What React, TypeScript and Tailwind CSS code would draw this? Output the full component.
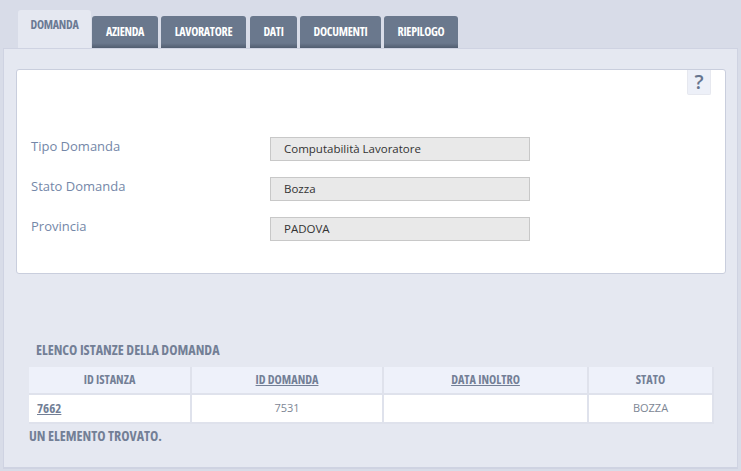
import React from "react";

const tabs = [
  { label: "AZIENDA", width: "w-[66px]", margin: "ml-[1px]" },
  { label: "LAVORATORE", width: "w-[85px]", margin: "ml-[3px]" },
  { label: "DATI", width: "w-[47px]", margin: "ml-[4px]" },
  { label: "DOCUMENTI", width: "w-[81px]", margin: "ml-[3px]" },
  { label: "RIEPILOGO", width: "w-[74px]", margin: "ml-[3px]" },
];

const fields = [
  { label: "Tipo Domanda", value: "Computabilità Lavoratore" },
  { label: "Stato Domanda", value: "Bozza" },
  { label: "Provincia", value: "PADOVA" },
];

const condensed = "font-bold [font-stretch:75%]";
const headCell =
  "h-[28px] flex items-center justify-center bg-[#eef1fa] border-r-2 border-b-2 border-[#dfe2ec] text-[#737f96] text-[12.2px]";
const bodyCell =
  "h-[29px] flex items-center justify-center bg-white border-r-2 border-b-2 border-[#dfe2ec] text-[#7d8694] text-[11px]";

const App: React.FC = () => {
  return (
    <div className="w-[741px] h-[471px] overflow-hidden bg-[#d8dce8] font-['Open_Sans',sans-serif] pt-[10px]">
      <div className="flex items-end h-[38px] pl-[18px]">
        <div
          className={`w-[73px] h-[38px] pb-[8px] flex items-center justify-center rounded-t-[3px] bg-[#e5e8f1] text-[#6b7a94] text-[12px] tracking-[-0.3px] ${condensed}`}
        >
          DOMANDA
        </div>
        {tabs.map((tab) => (
          <div
            key={tab.label}
            className={`${tab.width} ${tab.margin} h-[32px] flex items-center justify-center rounded-t-[3px] bg-gradient-to-b from-[#6a788d] from-85% to-[#515d70] text-white text-[12px] tracking-[-0.3px] ${condensed}`}
          >
            {tab.label}
          </div>
        ))}
      </div>

      <div className="ml-[3px] w-[735px] h-[421px] bg-[#e5e8f1] border border-[#cfd3e2] border-b-2 pl-[12px] pt-[20px]">
        <div className="w-[710px] h-[205px] bg-white border border-[#c9cedd] rounded-[3px] flex flex-col">
          <div className="flex justify-end pr-[14px] h-[26px]">
            <div className="w-[24px] h-[25px] bg-[#edf0f8] rounded-b-[2px] border-x border-b border-[#e6e8ef] flex items-center justify-center text-[#66758f] text-[20px] font-semibold leading-none">
              ?
            </div>
          </div>
          <div className="flex flex-col gap-[16px] pt-[41px] pl-[14px]">
            {fields.map((field) => (
              <div key={field.label} className="flex items-start h-[24px]">
                <div className="w-[239px] text-[13px] leading-[18px] text-[#7487a8]">
                  {field.label}
                </div>
                <div className="w-[260px] h-[24px] bg-[#e9e9e9] border border-[#c8c8c8] pl-[13px] flex items-center text-[11.5px] text-[#333]">
                  {field.value}
                </div>
              </div>
            ))}
          </div>
        </div>

        <div
          className={`mt-[67px] ml-[20px] h-[18px] leading-[18px] text-[#737f96] text-[14px] ${condensed}`}
        >
          ELENCO ISTANZE DELLA DOMANDA
        </div>
        <div className="mt-[8px] ml-[13px] w-[685px] grid grid-cols-[163px_192px_205px_125px] text-center">
          <div className={`${headCell} ${condensed}`}>ID ISTANZA</div>
          <div className={`${headCell} ${condensed} underline`}>ID DOMANDA</div>
          <div className={`${headCell} ${condensed} underline`}>DATA INOLTRO</div>
          <div className={`${headCell} ${condensed}`}>STATO</div>
          <div className={`h-[29px] flex items-center pl-[8px] bg-white border-r-2 border-b-2 border-[#dfe2ec] text-[#737f96] text-[13px] underline ${condensed}`}>
            7662
          </div>
          <div className={bodyCell}>7531</div>
          <div className="h-[29px] bg-white border-r-2 border-b-2 border-[#dfe2ec]" />
          <div className={bodyCell}>BOZZA</div>
        </div>
        <div className={`mt-[3px] ml-[13px] text-[#737f96] text-[14px] leading-[18px] ${condensed}`}>
          UN ELEMENTO TROVATO.
        </div>
      </div>
    </div>
  );
};

export default App;
